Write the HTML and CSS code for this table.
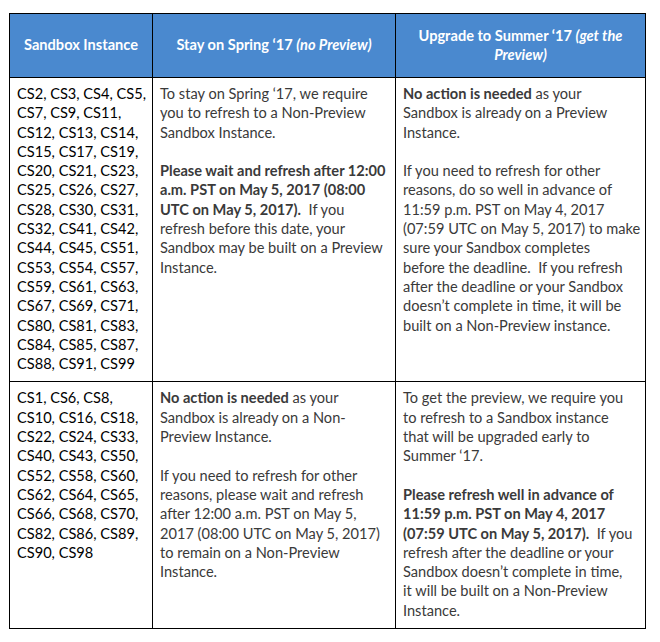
FILE: index.html
```html
<!DOCTYPE html>
<html>
<head>
<meta charset="utf-8">
<link rel="stylesheet" href="styles.css">
</head>
<body>
<table class="grid">
  <colgroup>
    <col class="c1"><col class="c2"><col class="c3">
  </colgroup>
  <thead>
    <tr>
      <th>Sandbox Instance</th>
      <th>Stay on Spring ‘17 <em>(no Preview)</em></th>
      <th>Upgrade to Summer ‘17 <em>(get the<br>Preview)</em></th>
    </tr>
  </thead>
  <tbody>
    <tr>
      <td class="ids">CS2, CS3, CS4, CS5, CS7, CS9, CS11, CS12, CS13, CS14, CS15, CS17, CS19, CS20, CS21, CS23, CS25, CS26, CS27, CS28, CS30, CS31, CS32, CS41, CS42, CS44, CS45, CS51, CS53, CS54, CS57, CS59, CS61, CS63, CS67, CS69, CS71, CS80, CS81, CS83, CS84, CS85, CS87, CS88, CS91, CS99</td>
      <td>
        <p>To stay on Spring ‘17, we require<br>you to refresh to a Non-Preview<br>Sandbox Instance.</p>
        <p><b>Please wait and refresh after 12:00<br>a.m. PST on May 5, 2017 (08:00<br>UTC on May 5, 2017).</b>&nbsp; If you<br>refresh before this date, your<br>Sandbox may be built on a Preview<br>Instance.</p>
      </td>
      <td>
        <p><b>No action is needed</b> as your<br>Sandbox is already on a Preview<br>Instance.</p>
        <p>If you need to refresh for other<br>reasons, do so well in advance of<br>11:59 p.m. PST on May 4, 2017<br>(07:59 UTC on May 5, 2017) to make<br>sure your Sandbox completes<br>before the deadline.&nbsp; If you refresh<br>after the deadline or your Sandbox<br>doesn’t complete in time, it will be<br>built on a Non-Preview instance.</p>
      </td>
    </tr>
    <tr>
      <td class="ids">CS1, CS6, CS8, CS10, CS16, CS18, CS22, CS24, CS33, CS40, CS43, CS50, CS52, CS58, CS60, CS62, CS64, CS65, CS66, CS68, CS70, CS82, CS86, CS89, CS90, CS98</td>
      <td>
        <p><b>No action is needed</b> as your<br>Sandbox is already on a Non-<br>Preview Instance.</p>
        <p>If you need to refresh for other<br>reasons, please wait and refresh<br>after 12:00 a.m. PST on May 5,<br>2017 (08:00 UTC on May 5, 2017)<br>to remain on a Non-Preview<br>Instance.</p>
      </td>
      <td>
        <p>To get the preview, we require you<br>to refresh to a Sandbox instance<br>that will be upgraded early to<br>Summer ‘17.</p>
        <p><b>Please refresh well in advance of<br>11:59 p.m. PST on May 4, 2017<br>(07:59 UTC on May 5, 2017).</b>&nbsp; If you<br>refresh after the deadline or your<br>Sandbox doesn’t complete in time,<br>it will be built on a Non-Preview<br>Instance.</p>
      </td>
    </tr>
  </tbody>
</table>
</body>
</html>
```
FILE: styles.css
```css
html, body {
  margin: 0;
  padding: 0;
  background: #ffffff;
}
body {
  padding: 13px 0 0 9px;
  font-family: Lato, "Open Sans", "Liberation Sans", sans-serif;
  font-size: 14.6px;
  line-height: 19.3px;
}
.grid {
  border-collapse: collapse;
  table-layout: fixed;
  width: 636px;
}
.c1 { width: 143px; }
.c2 { width: 243px; }
.c3 { width: 250px; }
.grid th,
.grid td {
  border: 1px solid #000;
}
.grid th {
  background: #4a89cf;
  color: #ffffff;
  font-weight: bold;
  height: 63px;
  padding: 0 2px;
  line-height: 18.5px;
  text-align: center;
  vertical-align: middle;
}
.grid th em {
  font-style: italic;
}
.grid td {
  vertical-align: top;
  padding: 6px 4px 8px 7px;
  color: #3a3a3a;
  text-align: left;
}
.grid td.ids {
  color: #000;
}
.grid p {
  margin: 0 0 19.3px 0;
}
.grid p:last-child {
  margin-bottom: 0;
}
.grid b {
  font-weight: bold;
}
```
